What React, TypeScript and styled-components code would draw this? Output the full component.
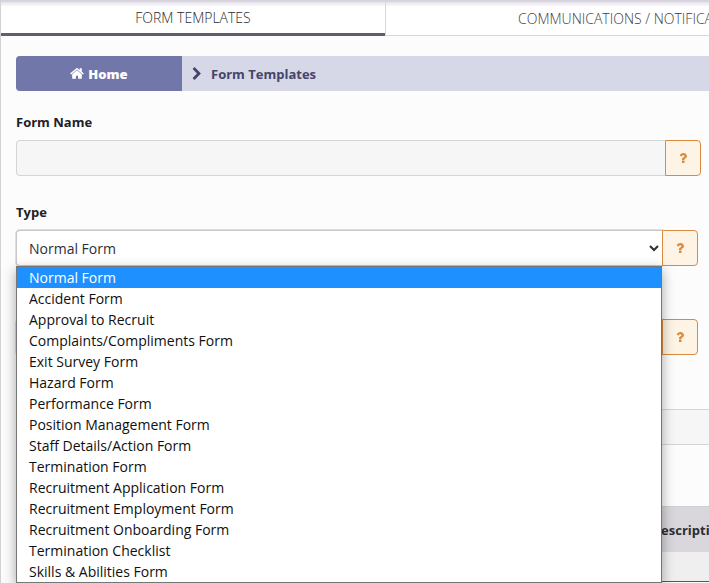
import React from "react";
import styled, { createGlobalStyle, css } from "styled-components";

const GlobalStyle = createGlobalStyle`
  *, *::before, *::after { box-sizing: border-box; }
  html { overflow: hidden; }
  body {
    margin: 0;
    background: #fcfcfc;
    color: #1d2129;
    font-family: "Open Sans", "Noto Sans", sans-serif;
    font-size: 14px;
  }
`;

const Page = styled.div`
  min-height: 100vh;
  overflow: hidden;
  border-left: 1px solid #d3d1d6;
`;

const Tabs = styled.nav`
  display: flex;
  height: 36px;
  border-top: 2px solid #d8d4dd;
  background: linear-gradient(#e6e1ec, #ffffff 5px);
`;

const Tab = styled.a<{ $active?: boolean }>`
  flex: none;
  display: flex;
  align-items: center;
  justify-content: center;
  min-width: 384px;
  padding: 0 132px;
  font-size: 14px;
  font-weight: 300;
  text-decoration: none;
  white-space: nowrap;
  ${({ $active }) =>
    $active
      ? css`
          color: #2a2a2e;
          border-bottom: 3px solid #605f67;
        `
      : css`
          color: #3c3c41;
          border-left: 1px solid #d8d7da;
          border-bottom: 1px solid #d8d7da;
        `}
`;

const Content = styled.main`
  padding: 20px 0 0 15px;
`;

const Breadcrumb = styled.nav`
  display: flex;
  height: 35px;
  overflow: hidden;
  border-radius: 4px 0 0 4px;
  background: #d6d8e7;
  font-size: 13px;
  font-weight: 700;
`;

const HomeLink = styled.a`
  display: flex;
  align-items: center;
  justify-content: center;
  gap: 4px;
  width: 166px;
  background: #7277a9;
  color: #ffffff;
  font-weight: 800;
  text-decoration: none;
`;

const Crumb = styled.span`
  display: flex;
  align-items: center;
  gap: 7px;
  padding-left: 8px;
  color: #45446a;
`;

const Glyph = styled.svg`
  display: block;
  flex: none;
  fill: currentColor;
`;

const Field = styled.div<{ $gap: number }>`
  display: flex;
  flex-direction: column;
  gap: 8px;
  padding-top: ${({ $gap }) => $gap}px;
`;

const Label = styled.label`
  height: 20px;
  font-size: 13px;
  font-weight: 700;
  line-height: 20px;
`;

const Group = styled.div<{ $inset: number }>`
  position: relative;
  display: flex;
  height: 36px;
  margin-right: ${({ $inset }) => $inset}px;
`;

const control = css`
  flex: 1;
  min-width: 0;
  height: 36px;
  border: 1px solid #d5d5d8;
  border-radius: 4px 0 0 4px;
  color: #43464d;
  font-family: inherit;
  font-size: 14px;
  outline: none;
`;

const TextInput = styled.input`
  ${control}
  padding: 0 12px;
  border-right: 0;
  background: #f6f6f6;
`;

const Select = styled.select`
  ${control}
  padding: 0 3px 0 8px;
  border-color: #c8c8ca;
  border-right: 0;
  background: #ffffff;
  color: #2b2e35;
  box-shadow: 0 0 0 1px #dededf;
`;

const HelpButton = styled.button`
  position: relative;
  display: flex;
  align-items: center;
  justify-content: center;
  width: 36px;
  height: 36px;
  padding: 0;
  border: 1px solid #d98a3d;
  border-radius: 0 4px 4px 0;
  background: #fdf4e6;
  color: #d98a3d;
`;

const OptionList = styled.ul`
  position: absolute;
  z-index: 2;
  top: 36px;
  left: 0;
  right: 36px;
  margin: 0;
  padding: 0;
  list-style: none;
  border: 1px solid #767676;
  background: #ffffff;
  box-shadow: 0 4px 12px rgba(0, 0, 0, 0.35);
`;

const OptionItem = styled.li<{ $selected: boolean }>`
  height: 21px;
  padding-left: 12px;
  line-height: 21px;
  white-space: nowrap;
  background: ${({ $selected }) => ($selected ? "#1e90ff" : "#ffffff")};
  color: ${({ $selected }) => ($selected ? "#ffffff" : "#101010")};
`;

const Table = styled.table`
  width: 100%;
  margin-top: 61px;
  table-layout: fixed;
  border-collapse: collapse;
  border-top: 1px solid #cfced1;
  border-bottom: 1px solid #55555a;
`;

const HeaderCell = styled.th<{ $width?: string }>`
  width: ${({ $width }) => $width ?? "auto"};
  height: 45px;
  padding: 2px 0 0;
  background: #d9d7db;
  color: #2d2d31;
  font-size: 13px;
  text-align: left;
  white-space: nowrap;
`;

const Cell = styled.td`
  height: 30px;
  padding: 0;
  background: #efefef;
`;

const HomeIcon = () => (
  <Glyph width="14" height="15" viewBox="0 0 1664 1792" aria-hidden="true">
    <path d="M1408 992v480q0 26-19 45t-45 19H960v-384H704v384H320q-26 0-45-19t-19-45V992q0-1 .5-3t.5-3l575-474 575 474q1 2 1 6zm223-69l-62 74q-8 9-21 11h-3q-13 0-21-7L832 424l-692 577q-12 8-24 7-13-2-21-11l-62-74q-8-10-7-23.500T37 878L756 279q32-26 76-26t76 26l244 204V288q0-14 9-23t23-9h192q14 0 23 9t9 23v408l219 182q10 8 11 21.500t-7 23.500z" />
  </Glyph>
);

const ChevronIcon = () => (
  <Glyph width="14" height="14" viewBox="0 0 1792 1792" aria-hidden="true">
    <path d="M1363 877l-742 742q-19 19-45 19t-45-19l-166-166q-19-19-19-45t19-45l531-531-531-531q-19-19-19-45t19-45l166-166q19-19 45-19t45 19l742 742q19 19 19 45t-19 45z" />
  </Glyph>
);

const Help = ({ topic }: { topic: string }) => (
  <HelpButton type="button" aria-label={`Help: ${topic}`}>
    <Glyph width="14" height="14" viewBox="0 0 1792 1792" aria-hidden="true">
      <path d="M1088 1256v240q0 16-12 28t-28 12h-240q-16 0-28-12t-12-28v-240q0-16 12-28t28-12h240q16 0 28 12t12 28zm316-600q0 54-15.500 101t-35 76.500-55 59.500-57.500 43.500-61 35.500q-41 23-68.500 65t-27.500 67q0 17-12 32.500t-28 15.500h-240q-15 0-25.500-18.500t-10.500-37.500v-45q0-83 65-156.500t143-108.500q59-27 84-56t25-76q0-42-46.500-74t-107.500-32q-65 0-108 29-35 25-107 115-13 16-31 16-12 0-25-8l-164-125q-13-10-15.500-25t5.500-28q160-266 464-266 80 0 161 31t146 83 106 127.500 41 158.500z" />
    </Glyph>
  </HelpButton>
);

const formTypes = [
  "Normal Form",
  "Accident Form",
  "Approval to Recruit",
  "Complaints/Compliments Form",
  "Exit Survey Form",
  "Hazard Form",
  "Performance Form",
  "Position Management Form",
  "Staff Details/Action Form",
  "Termination Form",
  "Recruitment Application Form",
  "Recruitment Employment Form",
  "Recruitment Onboarding Form",
  "Termination Checklist",
  "Skills & Abilities Form",
];

export default function App() {
  const [type, setType] = React.useState(formTypes[0]);

  return (
    <Page>
      <GlobalStyle />
      <Tabs>
        <Tab href="#templates" $active>
          FORM TEMPLATES
        </Tab>
        <Tab href="#communications">COMMUNICATIONS / NOTIFICATIONS</Tab>
      </Tabs>
      <Content>
        <Breadcrumb aria-label="Breadcrumb">
          <HomeLink href="#home">
            <HomeIcon />
            Home
          </HomeLink>
          <Crumb>
            <ChevronIcon />
            Form Templates
          </Crumb>
        </Breadcrumb>

        <Field $gap={21}>
          <Label htmlFor="form-name">Form Name</Label>
          <Group $inset={8}>
            <TextInput id="form-name" type="text" />
            <Help topic="form name" />
          </Group>
        </Field>

        <Field $gap={26}>
          <Label htmlFor="form-type">Type</Label>
          <Group $inset={11}>
            <Select id="form-type" value={type} onChange={(e) => setType(e.target.value)}>
              {formTypes.map((name) => (
                <option key={name}>{name}</option>
              ))}
            </Select>
            <Help topic="type" />
            <OptionList role="listbox" aria-label="Type">
              {formTypes.map((name) => (
                <OptionItem
                  key={name}
                  role="option"
                  aria-selected={name === type}
                  $selected={name === type}
                  onClick={() => setType(name)}
                >
                  {name}
                </OptionItem>
              ))}
            </OptionList>
          </Group>
        </Field>

        <Field $gap={25}>
          <Label htmlFor="form-category" />
          <Group $inset={11}>
            <Select id="form-category" aria-label="Category" />
            <Help topic="category" />
          </Group>
        </Field>

        <Field $gap={26}>
          <Label htmlFor="form-search" />
          <Group $inset={0}>
            <TextInput id="form-search" type="text" aria-label="Search" />
          </Group>
        </Field>

        <Table>
          <thead>
            <tr>
              <HeaderCell $width="91.7%" />
              <HeaderCell>Description</HeaderCell>
            </tr>
          </thead>
          <tbody>
            <tr>
              <Cell />
              <Cell />
            </tr>
          </tbody>
        </Table>
      </Content>
    </Page>
  );
}
